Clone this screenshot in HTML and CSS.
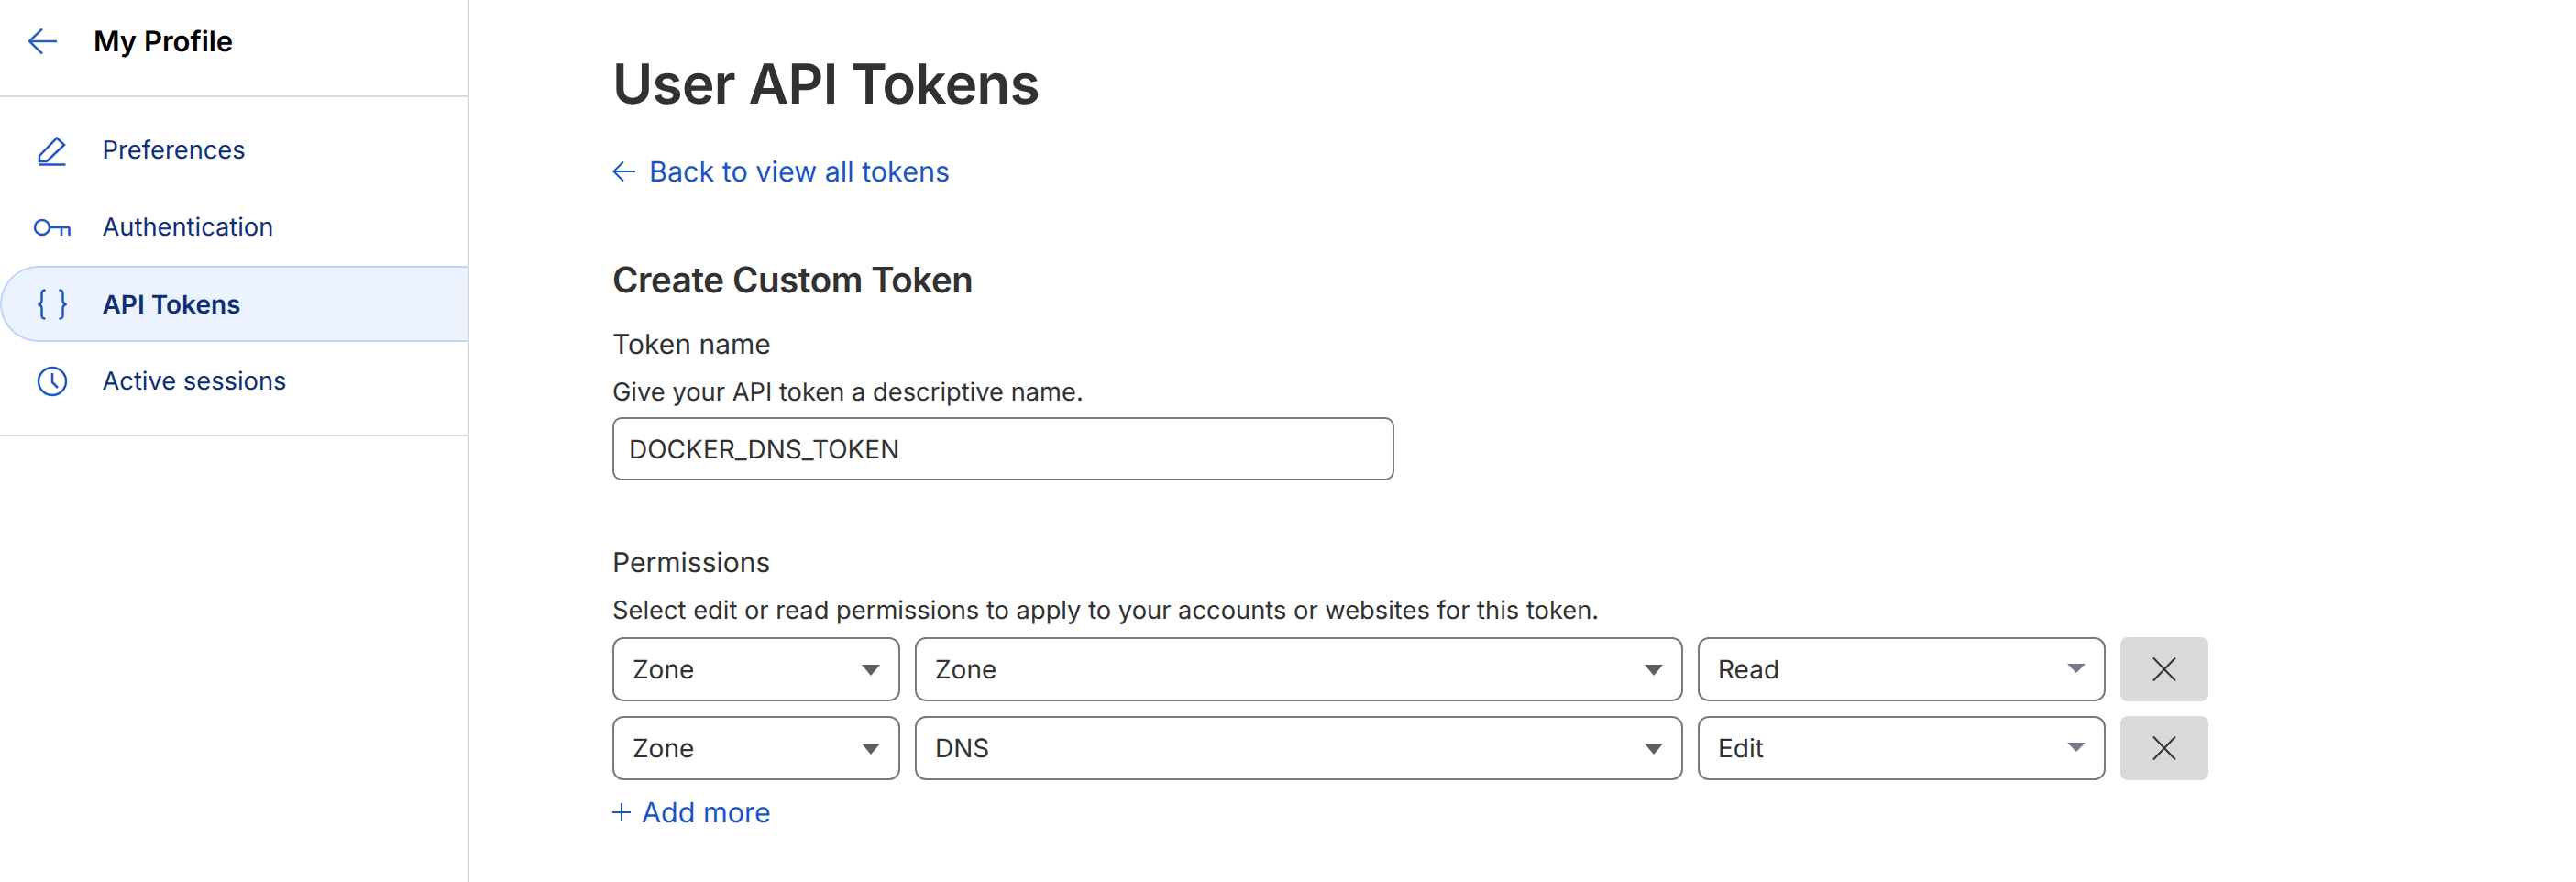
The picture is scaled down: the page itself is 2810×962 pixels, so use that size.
FILE: index.html
```html
<!DOCTYPE html>
<html lang="en">
<head>
<meta charset="utf-8">
<title>User API Tokens</title>
<link rel="stylesheet" href="styles.css">
</head>
<body>
<div class="page">
  <aside class="sidebar">
    <header class="side-head">
      <svg class="back-icon" width="34" height="30" viewBox="0 0 34 30"><path d="M32 15H2M16 1.500 2 15l14 13.500"/></svg>
      <span class="side-title">My Profile</span>
    </header>
    <nav class="side-nav">
      <a class="nav-item">
        <span class="nav-icon"><svg width="32" height="34" viewBox="0 0 32 34"><path d="M1.500 32.500h29M2 28.500V23L21 3.500l8 7.500-19 18H2z"/></svg></span>
        <span class="nav-label">Preferences</span>
      </a>
      <a class="nav-item">
        <span class="nav-icon"><svg width="42" height="22" viewBox="0 0 42 22"><circle cx="10" cy="11" r="8"/><path d="M18 11h22M31 11v9M39.500 11v9"/></svg></span>
        <span class="nav-label">Authentication</span>
      </a>
      <a class="nav-item active">
        <span class="nav-icon"><svg width="34" height="34" viewBox="0 0 34 34"><path d="M9.500 1.500c-3 0-4 1-4 4v7c0 2.500-1 4-4 4.500 3 .5 4 2 4 4.500v7c0 3 1 4 4 4M24.500 1.500c3 0 4 1 4 4v7c0 2.500 1 4 4 4.500-3 .5-4 2-4 4.500v7c0 3-1 4-4 4"/></svg></span>
        <span class="nav-label">API Tokens</span>
      </a>
      <a class="nav-item">
        <span class="nav-icon"><svg width="34" height="34" viewBox="0 0 34 34"><circle cx="17" cy="17" r="15"/><path d="M17 8v10l6 6"/></svg></span>
        <span class="nav-label">Active sessions</span>
      </a>
    </nav>
  </aside>
  <main class="main">
    <h1 class="title">User API Tokens</h1>
    <a class="link back-link"><svg width="26" height="24" viewBox="0 0 26 24"><path d="M25 12H2M12 1.500 1.500 12 12 22.500"/></svg>Back to view all tokens</a>
    <h2 class="section-title">Create Custom Token</h2>
    <div class="field-label">Token name</div>
    <p class="help">Give your API token a descriptive name.</p>
    <input class="text-input" type="text" value="DOCKER_DNS_TOKEN" readonly>
    <div class="field-label perm-label">Permissions</div>
    <p class="help perm-help">Select edit or read permissions to apply to your accounts or websites for this token.</p>
    <div class="rows">
      <div class="row">
        <div class="select s1">Zone<i class="caret"></i></div>
        <div class="select s2">Zone<i class="caret"></i></div>
        <div class="select s3">Read<i class="caret light"></i></div>
        <button class="remove" type="button"><svg width="26" height="26" viewBox="0 0 26 26"><path d="M1 .5l24 25M25 .5l-24 25"/></svg></button>
      </div>
      <div class="row">
        <div class="select s1">Zone<i class="caret"></i></div>
        <div class="select s2">DNS<i class="caret"></i></div>
        <div class="select s3">Edit<i class="caret light"></i></div>
        <button class="remove" type="button"><svg width="26" height="26" viewBox="0 0 26 26"><path d="M1 .5l24 25M25 .5l-24 25"/></svg></button>
      </div>
    </div>
    <a class="link add-link"><svg width="20" height="20" viewBox="0 0 20 20"><path d="M10 0v20M0 10h20"/></svg>Add more</a>
  </main>
</div>
</body>
</html>
```
FILE: styles.css
```css
* { box-sizing: border-box; }
html, body { margin: 0; height: 100%; background: #fff; overflow: hidden; }
body { font-family: Inter, "Liberation Sans", sans-serif; color: #313131; text-rendering: geometricPrecision; }
.page { display: flex; height: 962px; }
svg { display: block; fill: none; }

.sidebar { width: 512px; flex: none; border-right: 2px solid #d9d9d9; }
.side-head { height: 106px; border-bottom: 2px solid #d9d9d9; display: flex; align-items: center; padding: 0 0 14px 30px; gap: 38px; }
.back-icon path { stroke: #2c5fc4; stroke-width: 2.500; }
.side-title { font-size: 31px; font-weight: 600; color: #000; }
.side-nav { height: 370px; border-bottom: 2px solid #d9d9d9; padding-top: 16px; display: flex; flex-direction: column; gap: 1px; }
.nav-item { height: 83px; display: flex; align-items: center; font-size: 27.300px; line-height: 34px; color: #0d2f75; border: 2px solid transparent; border-right: 0; border-radius: 42px 0 0 42px; }
.nav-item.active { background: #ecf3fe; border-color: #bdd6fb; font-weight: 600; font-size: 28px; }
.nav-icon { width: 110px; margin-right: -.5px; flex: none; display: flex; justify-content: center; }
.nav-icon svg * { stroke: #1f56c4; stroke-width: 2.500; }
.nav-label { padding-top: 1px; }

.main { padding: 50px 0 0 156px; flex: 1; }
.title { margin: 0; font-size: 60px; line-height: 84px; height: 84px; font-weight: 600; letter-spacing: -.6px; }
.link { display: flex; align-items: center; color: #1a55c4; font-size: 30.500px; }
.link svg path { stroke: #1a55c4; stroke-width: 2; }
.back-link { margin-top: 30px; height: 46px; gap: 14px; }
.section-title { margin: 70px 0 0; font-size: 38.500px; line-height: 52px; font-weight: 600; letter-spacing: -.4px; }
.field-label { margin-top: 24px; font-size: 30px; line-height: 40px; }
.help { margin: 12px 0 0; font-size: 27.300px; line-height: 40px; }
.text-input { display: block; margin-top: 7px; width: 853px; height: 69px; border: 2px solid #7a7a7a; border-radius: 10px; padding: 0 16px; font: 28px Inter, "Liberation Sans", sans-serif; color: #313131; background: #fff; outline: 0; text-rendering: geometricPrecision; }
.perm-label { margin-top: 70px; }
.perm-help { margin-top: 12px; }
.rows { margin-top: 9px; display: flex; flex-direction: column; gap: 16px; }
.row { display: flex; gap: 16px; height: 70px; }
.select { display: flex; align-items: center; justify-content: space-between; height: 70px; border: 2px solid #7a7a7a; border-radius: 12px; padding: 0 20px; font-size: 28px; }
.s1 { width: 314px; }
.s2 { width: 838px; }
.s3 { width: 445px; }
.caret { width: 0; height: 0; border-left: 10px solid transparent; border-right: 10px solid transparent; border-top: 12px solid #5f5f5f; margin-top: 2px; }
.caret.light { border-top: 10px solid #767b85; margin-top: -2px; }
.remove { width: 96px; height: 70px; background: #d9d9d9; border: 0; border-radius: 8px; padding: 0; display: flex; align-items: center; justify-content: center; }
.remove path { stroke: #313131; stroke-width: 2; }
.add-link { margin-top: 13px; height: 44px; gap: 12px; }
```
